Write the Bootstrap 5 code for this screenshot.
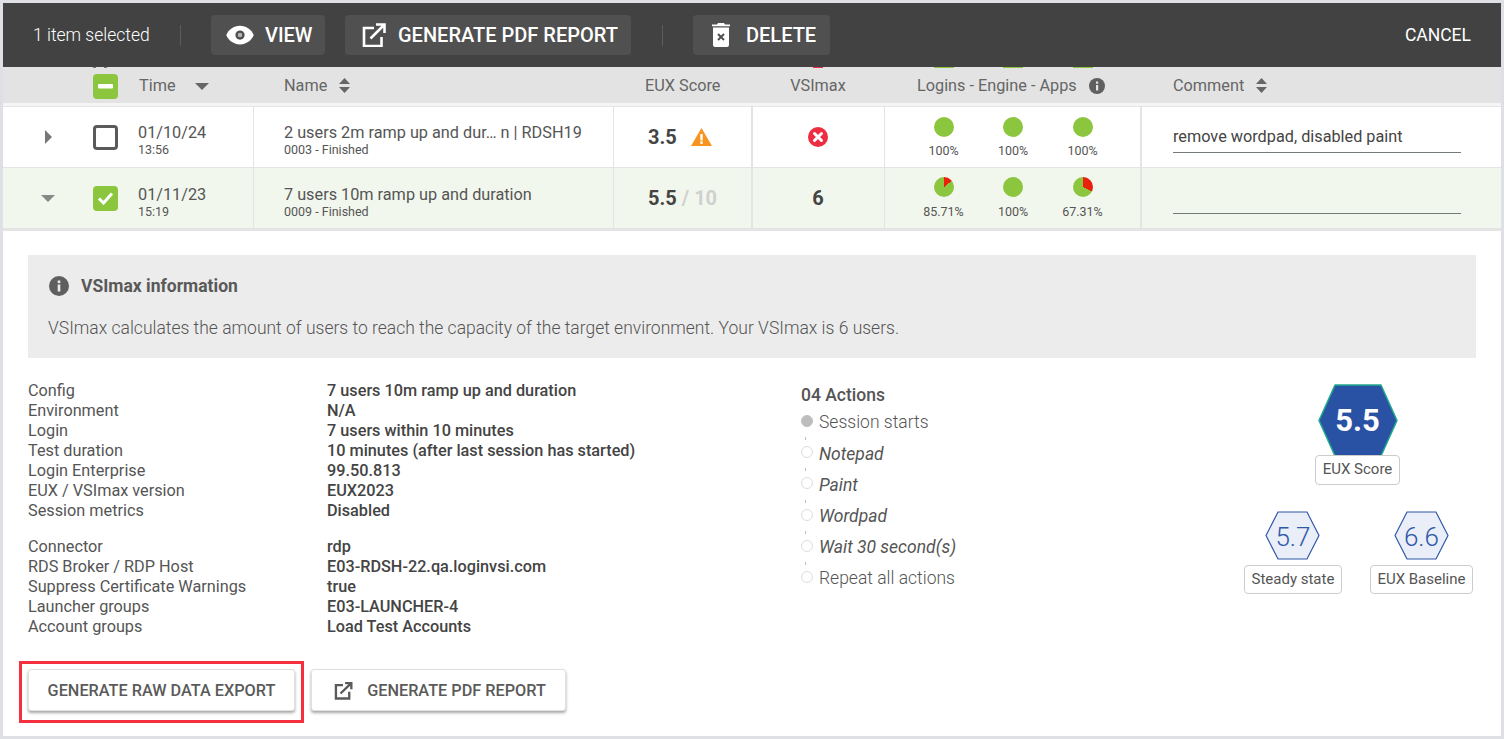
<!DOCTYPE html>
<html lang="en">
<head>
<meta charset="utf-8">
<title>Load test result</title>
<link href="https://cdn.jsdelivr.net/npm/bootstrap@5.3.0/dist/css/bootstrap.min.css" rel="stylesheet">
<style>
html,body{height:100%;overflow:hidden}
body{background:#dfe0e6;font-family:Roboto,"Liberation Sans",sans-serif;color:#555;padding:3px;font-size:16.25px}
.frame-in{background:#fff;height:733px;overflow:hidden}
.topbar{height:64px;background:#424242;color:#fff;padding:0 30px 0 30px;line-height:1}
.sel-count{font-size:17.5px;font-weight:300;width:147px;padding-top:2px}
.vsep{width:1px;height:21px;background:#5c5c5c}
.act{height:40px;background:#505050;color:#fff;border:0;border-radius:4px;font-size:20px;font-weight:500;padding:0;display:flex;align-items:center;justify-content:flex-start;line-height:1}
.act:hover{background:#505050;color:#fff}
.act-view{width:114px;margin-left:30px;padding-left:14px;gap:10px}
.act-pdf{width:286px;margin-left:20px;padding-left:17px;gap:12px}
.act-del{width:137px;margin-left:30px;padding-left:19px;gap:16px}
.vsep-2{margin-left:31px}
.cancel{color:#fff;font-size:17.5px;font-weight:400;padding-top:2px}
.grid-row{display:grid;grid-template-columns:251px 360px 139px 132px 257px 1fr}
.peek{height:1px;background:linear-gradient(90deg,#e3e3e3 90px,#777 90px,#777 93px,#e3e3e3 93px,#e3e3e3 101px,#777 101px,#777 104px,#e3e3e3 104px,#e3e3e3 810px,#ec2d42 810px,#ec2d42 820px,#e3e3e3 820px,#e3e3e3 931px,#8cc63f 931px,#8cc63f 951px,#e3e3e3 951px,#e3e3e3 1000px,#8cc63f 1000px,#8cc63f 1020px,#e3e3e3 1020px,#e3e3e3 1070px,#8cc63f 1070px,#8cc63f 1090px,#e3e3e3 1090px)}
.head-row{height:35px;background:#e3e3e3;align-items:center;color:#666;padding-top:1px}
.head-row>div{padding-left:30px}
.head-row .first{padding-left:0;display:flex;align-items:center}
.head-spacer{width:90px}
.head-time{margin-left:21px}
.sort-down{margin-left:19px}
.sort-pair{margin-left:12px;vertical-align:-2px}
.head-eux{padding-left:31px!important}
.head-vsi{padding-left:0!important;padding-right:2px;text-align:center}
.head-log{padding-left:32px!important;display:flex;align-items:center}
.head-com{padding-left:31px!important}
.info-dot{margin-left:12px}
.gap-strip{height:4px;background:#f5f5f5;border-bottom:1px solid #e4e4e4}
.data-row{height:61px;border-bottom:1px solid #e4e4e4}
.data-row.sel{background:#f2f7ed}
.data-row>div{border-right:1px solid #e4e4e4;display:flex;align-items:center}
.data-row>div:nth-child(3),.data-row>div:nth-child(5){border-right-width:2px}
.data-row>div:last-child{border-right:0}
.exp-cell{width:90px;display:flex;justify-content:center}
.sq{width:25px;height:25px;border-radius:4px;flex:none;display:flex;align-items:center;justify-content:center}
.sq-on{background:#8cc63f}
.sq-off{border:3px solid #5a5a5a;background:#fff}
.when{margin-left:20px;padding-top:4px}
.sel .when{padding-top:6px}
.line1{font-size:16.25px;line-height:22px;color:#555}
.line2{font-size:12.5px;line-height:12px;color:#555}
.name-cell{padding-left:30px;padding-top:4px;flex-direction:column;align-items:flex-start!important;justify-content:center}
.sel .name-cell{padding-top:6px}
.score{font-size:20px;font-weight:700;color:#444;padding-left:34px}
.score i{font-style:normal;color:#d0d0d0;font-weight:700}
.score-vsi{padding-left:0;padding-right:1px}
.x-cell{padding-right:2px}
.warn{margin-left:14px}
.pies{justify-content:center;padding-left:1px}
.pie-wrap{width:69.5px;text-align:center;font-size:12.5px;line-height:14px;color:#555}
.pie{display:block;width:20px;height:20px;border-radius:50%;background:#8cc63f;margin:0 auto 7px}
.sel .pie{margin-bottom:8px}
.comment-cell{padding:0 40px 0 31px}
.comment-box{width:100%;height:30px;border-bottom:1px solid #737b78;color:#444;font-size:16.25px;line-height:27px;margin-top:1px}
.rule{height:2px;background:#e4e4e4}
.panel{padding:24px 25px 0 25px}
.info-box{background:#ececec;height:103px;padding:19px 20px}
.info-title{font-size:17.5px;font-weight:700;color:#595959;line-height:24px}
.info-icon{margin-right:4px;margin-left:1px}
.info-text{font-size:17.5px;font-weight:300;color:#555;line-height:24px;margin-top:18px}
.lower{margin-top:23px;height:255px}
.spec{display:grid;grid-template-columns:299px 1fr;line-height:20px;font-size:16.25px;color:#555}
.spec b{font-weight:500;color:#444}
.spec+.spec{margin-top:16px}
.spec-col{width:773px}
.acts{width:416px;padding-top:4px}
.acts h6{font-size:17.5px;font-weight:500;color:#555;line-height:20px;margin:0 0 2px}
.step{height:31.2px;display:flex;align-items:center;gap:6px;font-size:17.5px;font-weight:300;color:#555;position:relative}
.step.it{font-style:italic;font-weight:400}
.dot{width:12px;height:12px;border-radius:50%;border:1px solid #ddd;background:#fff;flex:none;margin-top:-3px}
.dot.full{background:#bdbdbd;border-color:#bdbdbd}
.step+.step::before{content:"";position:absolute;left:4px;top:-1px;width:1px;height:3px;background:#bbb}
.scores{width:229px;margin-left:27px;padding-top:3px}
.big-wrap{text-align:center}
.hex{position:relative;display:flex;justify-content:center}
.hex span{position:absolute;left:0;right:0;text-align:center}
.big-num{font-size:31px;font-weight:700;color:#fff;top:18px;line-height:38px;padding-right:2px}
.small-num{font-size:26px;font-weight:300;color:#2f57a8;top:10px;line-height:32px}
.tag{display:inline-block;border:1px solid #ccc;border-radius:4px;font-size:15px;color:#555;background:#fff;padding:0 6.5px;line-height:27px;position:relative}
.tag-big{height:30px;line-height:27px;margin-top:-5px;margin-right:2px}
.tag-small{margin-top:5px}
.small-row{margin-top:26px}
.btns{margin-left:-9px;margin-top:25px}
.red-box{border:3px solid #f4303f;padding:5px 6px;height:62px}
.raw{height:42px;background:#fff;border:1px solid #e0e0e0;border-radius:3px;box-shadow:0 2px 3px rgba(0,0,0,.35);color:#5a5a5a;font-size:16.25px;font-weight:500;padding:2px 0 0;display:flex;align-items:center;justify-content:center;gap:14px}
.raw:hover{background:#fff;color:#5a5a5a}
.raw1{width:267px}
.raw2{width:255px;margin:8px 0 0 7px;padding-left:2px}
</style>
</head>
<body>
<div class="frame-in">
  <div class="topbar d-flex align-items-center">
    <div class="sel-count">1 item selected</div>
    <div class="vsep"></div>
    <button class="btn act act-view" type="button">
      <svg width="30" height="30" viewBox="0 0 24 24"><path fill="#fff" d="M12,4.500C7,4.500 2.730,7.610 1,12C2.730,16.390 7,19.500 12,19.500C17,19.500 21.270,16.390 23,12C21.270,7.610 17,4.500 12,4.500Z"/><circle cx="12" cy="12" r="3.700" fill="#505050"/><circle cx="12" cy="12" r="1.800" fill="#b5b5b5"/></svg>
      VIEW</button>
    <button class="btn act act-pdf" type="button">
      <svg width="24" height="24" viewBox="0 0 24 24" fill="none" stroke="#fff" stroke-width="2.600"><path d="M12 5H2v18h17.500v-9"/><path d="M8.500 15.500L21.500 2.500M14 1.500h8.500V10"/></svg>
      GENERATE PDF REPORT</button>
    <div class="vsep vsep-2"></div>
    <button class="btn act act-del" type="button">
      <svg width="18" height="24" viewBox="0 0 18 24" fill="#fff"><path d="M6 0h6l1 1.500h5v1.800H0V1.500h5zM1 4.500h16V22a2 2 0 0 1-2 2H3a2 2 0 0 1-2-2z"/><path d="M6 11l6 6M12 11l-6 6" stroke="#505050" stroke-width="2"/></svg>
      DELETE</button>
    <div class="cancel ms-auto">CANCEL</div>
  </div>

  <div class="peek"></div>
  <div class="grid-row head-row">
    <div class="first">
      <span class="head-spacer"></span>
      <span class="sq sq-on"><svg width="15" height="5" viewBox="0 0 15 5"><rect width="15" height="4.500" rx="1" fill="#fff"/></svg></span>
      <span class="head-time">Time</span>
      <svg class="sort-down" width="14" height="7" viewBox="0 0 14 7"><path d="M0 0h14L7 7z" fill="#666"/></svg>
    </div>
    <div>Name<svg class="sort-pair" width="11" height="15" viewBox="0 0 11 15" fill="#666"><path d="M0 6L5.500 0 11 6zM0 9h11l-5.500 6z"/></svg></div>
    <div class="head-eux">EUX Score</div>
    <div class="head-vsi">VSImax</div>
    <div class="head-log">Logins - Engine - Apps
      <svg class="info-dot" width="16" height="16" viewBox="0 0 16 16"><circle cx="8" cy="8" r="8" fill="#5f5f5f"/><rect x="7" y="7" width="2.200" height="5.500" fill="#e3e3e3"/><rect x="7" y="3.500" width="2.200" height="2.200" fill="#e3e3e3"/></svg></div>
    <div class="head-com">Comment<svg class="sort-pair" width="11" height="15" viewBox="0 0 11 15" fill="#666"><path d="M0 6L5.500 0 11 6zM0 9h11l-5.500 6z"/></svg></div>
  </div>
  <div class="gap-strip"></div>

  <div class="grid-row data-row">
    <div>
      <span class="exp-cell"><svg width="7" height="14" viewBox="0 0 7 14"><path d="M0 0l7 7-7 7z" fill="#777"/></svg></span>
      <span class="sq sq-off"></span>
      <span class="when"><div class="line1">01/10/24</div><div class="line2">13:56</div></span>
    </div>
    <div class="name-cell"><div class="line1">2 users 2m ramp up and dur… n | RDSH19</div><div class="line2">0003 - Finished</div></div>
    <div class="score">3.5
      <svg class="warn" width="21" height="18" viewBox="0 0 21 18"><path d="M10.500 0L21 18H0z" fill="#f7941d"/><rect x="9.300" y="6" width="2.400" height="6.500" fill="#fff"/><rect x="9.300" y="13.500" width="2.400" height="2.400" fill="#fff"/></svg></div>
    <div class="justify-content-center x-cell">
      <svg width="20" height="20" viewBox="0 0 20 20"><circle cx="10" cy="10" r="10" fill="#ec2d42"/><path d="M6.500 6.500l7 7M13.500 6.500l-7 7" stroke="#fff" stroke-width="3" stroke-linecap="round"/></svg></div>
    <div class="pies">
      <div class="pie-wrap"><span class="pie"></span>100%</div>
      <div class="pie-wrap"><span class="pie"></span>100%</div>
      <div class="pie-wrap"><span class="pie"></span>100%</div>
    </div>
    <div class="comment-cell"><div class="comment-box">remove wordpad, disabled paint</div></div>
  </div>

  <div class="grid-row data-row sel">
    <div>
      <span class="exp-cell"><svg width="14" height="7" viewBox="0 0 14 7"><path d="M0 0h14L7 7z" fill="#888"/></svg></span>
      <span class="sq sq-on"><svg width="17" height="14" viewBox="0 0 17 14" fill="none"><path d="M2 7.500l4.500 4.500L15 2.500" stroke="#fff" stroke-width="3"/></svg></span>
      <span class="when"><div class="line1">01/11/23</div><div class="line2">15:19</div></span>
    </div>
    <div class="name-cell"><div class="line1">7 users 10m ramp up and duration</div><div class="line2">0009 - Finished</div></div>
    <div class="score">5.5&nbsp;<i>/ 10</i></div>
    <div class="justify-content-center score score-vsi">6</div>
    <div class="pies">
      <div class="pie-wrap"><span class="pie" style="background:conic-gradient(#e8200c 0 14.29%,#8cc63f 0)"></span>85.71%</div>
      <div class="pie-wrap"><span class="pie"></span>100%</div>
      <div class="pie-wrap"><span class="pie" style="background:conic-gradient(#e8200c 0 32.69%,#8cc63f 0)"></span>67.31%</div>
    </div>
    <div class="comment-cell"><div class="comment-box"></div></div>
  </div>
  <div class="rule"></div>

  <div class="panel">
    <div class="info-box">
      <div class="info-title d-flex align-items-center gap-2">
        <svg class="info-icon" width="20" height="20" viewBox="0 0 20 20"><circle cx="10" cy="10" r="10" fill="#5f5f5f"/><rect x="8.700" y="8.500" width="2.600" height="7" fill="#ececec"/><rect x="8.700" y="4.500" width="2.600" height="2.600" fill="#ececec"/></svg>
        VSImax information</div>
      <div class="info-text">VSImax calculates the amount of users to reach the capacity of the target environment. Your VSImax is 6 users.</div>
    </div>

    <div class="lower d-flex">
      <div class="spec-col">
        <div class="spec">
          <span>Config</span><b>7 users 10m ramp up and duration</b>
          <span>Environment</span><b>N/A</b>
          <span>Login</span><b>7 users within 10 minutes</b>
          <span>Test duration</span><b>10 minutes (after last session has started)</b>
          <span>Login Enterprise</span><b>99.50.813</b>
          <span>EUX / VSImax version</span><b>EUX2023</b>
          <span>Session metrics</span><b>Disabled</b>
        </div>
        <div class="spec">
          <span>Connector</span><b>rdp</b>
          <span>RDS Broker / RDP Host</span><b>E03-RDSH-22.qa.loginvsi.com</b>
          <span>Suppress Certificate Warnings</span><b>true</b>
          <span>Launcher groups</span><b>E03-LAUNCHER-4</b>
          <span>Account groups</span><b>Load Test Accounts</b>
        </div>
      </div>
      <div class="acts">
        <h6>04 Actions</h6>
        <div class="step"><span class="dot full"></span>Session starts</div>
        <div class="step it"><span class="dot"></span>Notepad</div>
        <div class="step it"><span class="dot"></span>Paint</div>
        <div class="step it"><span class="dot"></span>Wordpad</div>
        <div class="step it"><span class="dot"></span>Wait 30 second(s)</div>
        <div class="step"><span class="dot"></span>Repeat all actions</div>
      </div>
      <div class="scores">
        <div class="big-wrap">
          <div class="hex">
            <svg width="82" height="73" viewBox="0 0 82 73"><path d="M17 1h46l16 35.500L63 72H17L1 36.500z" fill="#2a52a4" stroke="#20ab8c" stroke-width="1.500" stroke-linejoin="round"/></svg>
            <span class="big-num">5.5</span>
          </div>
          <span class="tag tag-big">EUX Score</span>
        </div>
        <div class="small-row d-flex justify-content-between">
          <div class="text-center">
            <div class="hex"><svg width="55" height="49" viewBox="0 0 55 49"><path d="M13 1h29l12 23.500L42 48H13L1 24.500z" fill="#e9eef8" stroke="#2f57a8" stroke-width="1.200"/></svg><span class="small-num">5.7</span></div>
            <span class="tag tag-small">Steady state</span>
          </div>
          <div class="text-center">
            <div class="hex"><svg width="55" height="49" viewBox="0 0 55 49"><path d="M13 1h29l12 23.500L42 48H13L1 24.500z" fill="#e9eef8" stroke="#2f57a8" stroke-width="1.200"/></svg><span class="small-num">6.6</span></div>
            <span class="tag tag-small">EUX Baseline</span>
          </div>
        </div>
      </div>
    </div>

    <div class="btns d-flex align-items-start">
      <div class="red-box"><button class="btn raw raw1" type="button">GENERATE RAW DATA EXPORT</button></div>
      <button class="btn raw raw2" type="button">
        <svg width="20" height="20" viewBox="0 0 24 24" fill="none" stroke="#5a5a5a" stroke-width="2.800"><path d="M12 5H3.500v16h16v-8"/><path d="M9 15L21 3.500M14.500 2.500h7.500V10"/></svg>
        GENERATE PDF REPORT</button>
    </div>
  </div>
</div>
<script src="https://cdn.jsdelivr.net/npm/bootstrap@5.3.0/dist/js/bootstrap.bundle.min.js"></script>
</body>
</html>
